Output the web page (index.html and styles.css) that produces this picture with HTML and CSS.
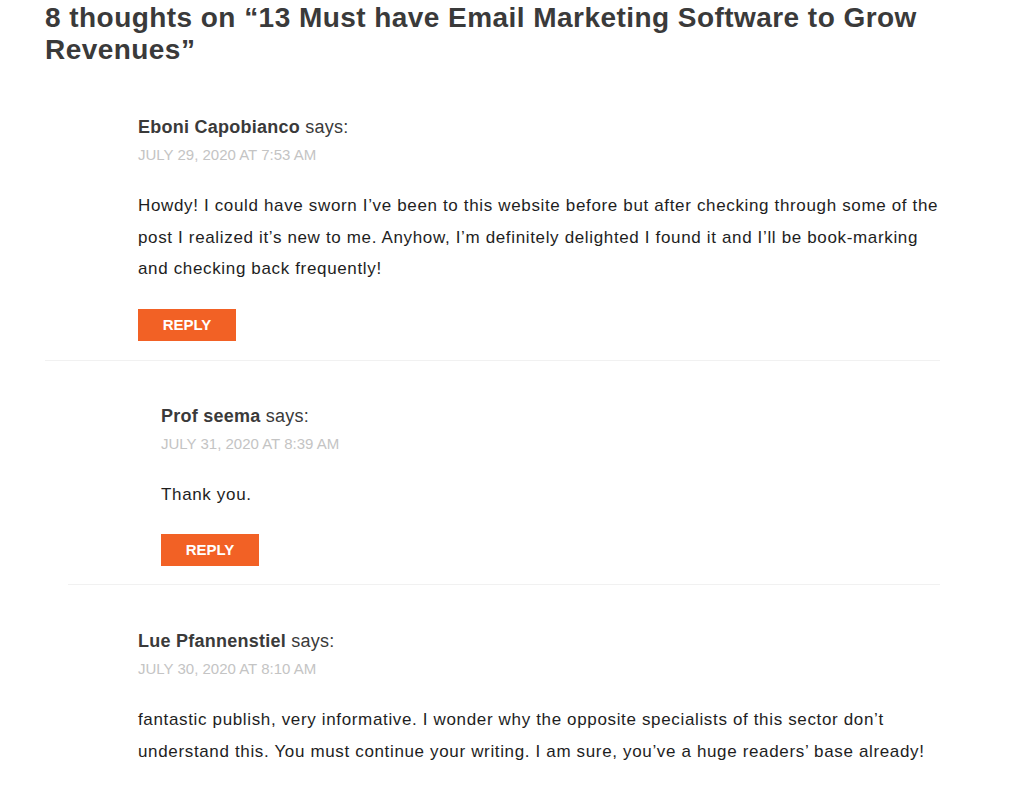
FILE: index.html
```html
<!DOCTYPE html>
<html lang="en">
<head>
<meta charset="utf-8">
<title>Comments</title>
<link rel="stylesheet" href="styles.css">
</head>
<body>
<div class="comments">
  <h2 class="comments-title">8 thoughts on “13 Must have Email Marketing Software to Grow Revenues”</h2>
  <ol class="comment-list">
    <li class="comment">
      <article class="comment-body">
        <div class="comment-author"><b class="fn">Eboni Capobianco</b> <span class="says">says:</span></div>
        <div class="comment-meta">July 29, 2020 at 7:53 am</div>
        <p class="comment-text">Howdy! I could have sworn I’ve been to this website before but after checking through some of the post I realized it’s new to me. Anyhow, I’m definitely delighted I found it and I’ll be book-marking and checking back frequently!</p>
        <a class="reply" href="#">Reply</a>
      </article>
      <ol class="children">
        <li class="comment">
          <article class="comment-body">
            <div class="comment-author"><b class="fn">Prof seema</b> <span class="says">says:</span></div>
            <div class="comment-meta">July 31, 2020 at 8:39 am</div>
            <p class="comment-text">Thank you.</p>
            <a class="reply" href="#">Reply</a>
          </article>
        </li>
      </ol>
    </li>
    <li class="comment">
      <article class="comment-body">
        <div class="comment-author"><b class="fn">Lue Pfannenstiel</b> <span class="says">says:</span></div>
        <div class="comment-meta">July 30, 2020 at 8:10 am</div>
        <p class="comment-text">fantastic publish, very informative. I wonder why the opposite specialists of this sector don’t understand this. You must continue your writing. I am sure, you’ve a huge readers’ base already!</p>
      </article>
    </li>
  </ol>
</div>
</body>
</html>
```
FILE: styles.css
```css
html, body {
  margin: 0;
  padding: 0;
  background: #ffffff;
}
body {
  font-family: "Liberation Sans", Arial, sans-serif;
  color: #222222;
}
.comments {
  width: 895px;
  padding-left: 45px;
}
.comments-title {
  margin: 2px 0 0 0;
  font-size: 28px;
  line-height: 32px;
  letter-spacing: 0.45px;
  font-weight: 700;
  color: #3a3a3a;
}
.comment-list,
.children {
  list-style: none;
  margin: 0;
  padding: 0;
}
.comment-list {
  margin-top: 49px;
}
.children {
  margin-left: 23px;
}
.comment-body {
  padding: 0 0 19px 93px;
  border-bottom: 1px solid #f1f1f1;
}
.children .comment-body {
  padding-top: 43px;
  padding-bottom: 18px;
}
.comment-list > .comment + .comment > .comment-body {
  padding-top: 44px;
  border-bottom: none;
}
.comment-author {
  font-size: 18px;
  line-height: 24px;
  letter-spacing: 0.25px;
  color: #3a3a3a;
}
.fn {
  font-weight: 700;
}
.comment-meta {
  margin-top: 6px;
  font-size: 15px;
  line-height: 20px;
  text-transform: uppercase;
  color: #c4c4c4;
}
.comment-text {
  margin: 25px 0 0 0;
  font-size: 17px;
  line-height: 31.5px;
  letter-spacing: 0.65px;
  color: #1e1e1e;
}
.reply {
  display: inline-block;
  margin-top: 24px;
  width: 98px;
  height: 32px;
  line-height: 32px;
  text-align: center;
  background: #f26125;
  color: #ffffff;
  font-size: 15px;
  font-weight: 700;
  text-transform: uppercase;
  text-decoration: none;
  vertical-align: top;
}
```
